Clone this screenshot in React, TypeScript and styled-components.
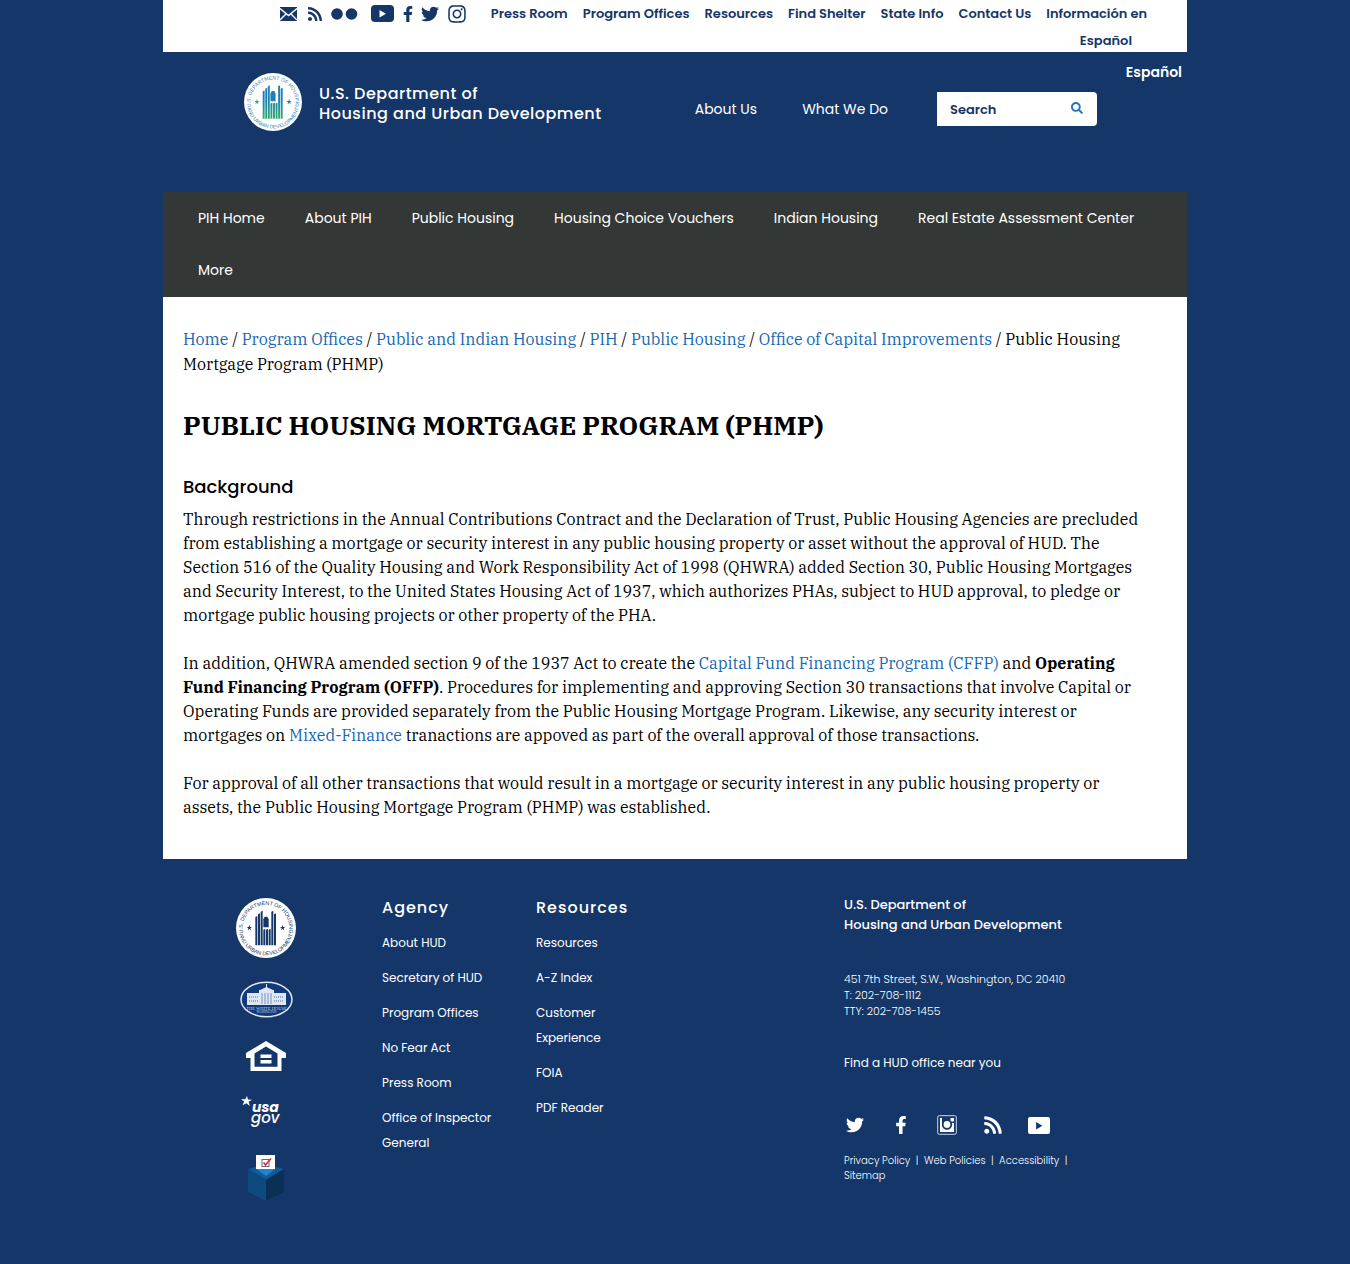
import React from "react";
import styled, { createGlobalStyle } from "styled-components";
import { FaFacebookF, FaInstagram, FaRss, FaSearch, FaTwitter } from "react-icons/fa";

const sans = 'Poppins, Inter, "Open Sans", sans-serif';
const serif = '"IBM Plex Serif", "Noto Serif", "DejaVu Serif", serif';
const navy = "#153669";

const GlobalStyle = createGlobalStyle`
  * { box-sizing: border-box; }
  html, body { margin: 0; background: ${navy}; }
  body { font-family: ${sans}; font-size: 14px; color: #000; }
  a { color: inherit; text-decoration: none; }
  ul { list-style: none; margin: 0; padding: 0; }
  svg { display: block; flex: none; }
`;

const Page = styled.div`
  max-width: 1024px;
  margin: 0 auto;
`;

/* ---------- utility bar ---------- */

const TopBar = styled.div`
  display: flex;
  justify-content: flex-end;
  align-items: flex-start;
  height: 52px;
  padding-right: 40px;
  background: #fff;
  color: ${navy};
`;

const TopSocial = styled.ul`
  display: flex;
  align-items: center;
  height: 27px;
`;

const TopSocialItem = styled.li<{ $gap: number }>`
  margin-right: ${(p) => p.$gap}px;
`;

const TopLinks = styled.nav`
  width: 680px;
  text-align: right;
  font-size: 13px;
  font-weight: 600;
  line-height: 27px;
`;

const TopLink = styled.a`
  margin-right: 15px;
`;

/* ---------- site header ---------- */

const Header = styled.header`
  height: 140px;
  color: #fff;
`;

const Language = styled.div`
  display: flex;
  justify-content: flex-end;
  height: 21px;
  padding: 10px 5px 0 0;
  font-size: 14px;
  font-weight: 600;
  line-height: 20px;
`;

const Masthead = styled.div`
  display: flex;
  align-items: center;
  padding: 0 90px 0 81px;
`;

const Brand = styled.a`
  display: flex;
  align-items: center;
  gap: 17px;
`;

const BrandName = styled.span`
  padding-top: 4px;
  font-size: 16px;
  font-weight: 500;
  line-height: 20px;
  letter-spacing: 0.5px;
`;

const Tools = styled.div`
  display: flex;
  align-items: center;
  margin-left: auto;
  padding-top: 14px;
`;

const MainLinks = styled.nav`
  display: flex;
  gap: 45px;
  line-height: 20px;
`;

const SearchForm = styled.form`
  display: flex;
  width: 160px;
  height: 34px;
  margin-left: 49px;
`;

const SearchInput = styled.input`
  width: 119px;
  padding: 2px 12px 0;
  border: 1px solid #fff;
  background: #fff;
  font: 600 13px ${sans};
  &::placeholder { color: ${navy}; opacity: 1; }
`;

const SearchButton = styled.button`
  flex: 1;
  display: flex;
  align-items: center;
  justify-content: center;
  padding: 0 0 2px;
  border: 0;
  border-radius: 0 4px 4px 0;
  background: #fff;
  color: #2e74b5;
`;

/* ---------- section navigation ---------- */

const SectionNav = styled.nav`
  display: flex;
  flex-wrap: wrap;
  padding: 0 15px 1px;
  background: #333837;
  color: #fff;
`;

const SectionLink = styled.a`
  padding: 0 20px;
  line-height: 52px;
`;

/* ---------- article ---------- */

const Article = styled.main`
  padding: 30px 20px 40px;
  background: #fff;
  font-family: ${serif};
  font-size: 16px;
  line-height: 24px;
`;

const Breadcrumb = styled.nav`
  line-height: 25px;
`;

const BodyLink = styled.a`
  color: #1567b3;
`;

const Title = styled.h1`
  margin: 31px 0 0;
  font-size: 26px;
  line-height: 34px;
`;

const SectionTitle = styled.h2`
  margin: 33px 0 8px;
  font-family: ${sans};
  font-size: 18px;
  font-weight: 500;
  line-height: 24px;
`;

const Paragraph = styled.p`
  margin: 0 0 24px;
  padding-right: 20px;
  &:last-child { margin-bottom: 0; }
`;

/* ---------- footer ---------- */

const Footer = styled.footer`
  display: flex;
  padding: 36px 90px 60px 73px;
  color: #fff;
`;

const LogoColumn = styled.div`
  display: flex;
  flex-direction: column;
  align-items: center;
  width: 60px;
  padding-top: 3px;
  margin-right: 86px;
`;

const LogoLink = styled.a<{ $gap: number }>`
  margin-bottom: ${(p) => p.$gap}px;
`;

const LinkColumn = styled.section`
  width: 114px;
  margin-right: 40px;
`;

const ColumnTitle = styled.h3`
  margin: 0 0 10px;
  font-size: 16px;
  font-weight: 500;
  line-height: 25px;
  letter-spacing: 1px;
`;

const ColumnItem = styled.li`
  margin-bottom: 10px;
  font-size: 12px;
  line-height: 25px;
`;

const Contact = styled.section`
  width: 253px;
  margin-left: auto;
`;

const ContactTitle = styled.h3`
  margin: 0 0 36px;
  font-size: 13px;
  font-weight: 500;
  line-height: 20px;
`;

const Address = styled.address`
  margin-bottom: 34px;
  font-size: 11px;
  font-style: normal;
  font-weight: 300;
  line-height: 16px;
`;

const Office = styled.a`
  display: block;
  margin-bottom: 42px;
  font-size: 12px;
  line-height: 20px;
`;

const FooterSocial = styled.ul`
  display: flex;
  align-items: center;
  height: 20px;
  gap: 24px;
  margin-bottom: 18px;
`;

const FooterSocialItem = styled.li`
  display: flex;
  justify-content: center;
  width: 22px;
`;

const Policies = styled.nav`
  font-size: 10px;
  font-weight: 300;
  line-height: 15px;
`;

/* ---------- drawings ---------- */

const bars = [
  [58, 54], [66, 46], [74, 38], [82, 92], [90, 92], [98, 92], [106, 38], [114, 46],
];

function Seal({ size, id, ink, top, bottom }: { size: number; id: string; ink: string; top: string; bottom: string }) {
  return (
    <svg width={size} height={size} viewBox="0 0 180 180" aria-hidden="true">
      <defs>
        <linearGradient id={`${id}-fill`} gradientUnits="userSpaceOnUse" x1="0" y1="38" x2="0" y2="142">
          <stop offset="0.4" stopColor={top} />
          <stop offset="1" stopColor={bottom} />
        </linearGradient>
        <path id={`${id}-arc`} d="M24 114 A70 70 0 1 1 156 114" />
        <path id={`${id}-lower`} d="M8 90 A82 82 0 0 0 172 90" />
      </defs>
      <circle cx="90" cy="90" r="90" fill="#fff" />
      <g fill={`url(#${id}-fill)`}>
        {bars.map(([x, y]) => (
          <path key={x} d={`M${x} ${y + 3}L${x + 6} ${y}V142H${x}Z`} />
        ))}
        <path d="M82 64L86 56H94L98 64V88H82Z" />
      </g>
      <path d="M40 81l2 6h6l-5 4 2 6-5-4-5 4 2-6-5-4h6z" fill={bottom} />
      <path d="M140 81l2 6h6l-5 4 2 6-5-4-5 4 2-6-5-4h6z" fill={top} />
      <g fill={ink} fontFamily="Liberation Sans, sans-serif" fontSize="16">
        <text><textPath href={`#${id}-arc`} startOffset="50%" textAnchor="middle">U.S. DEPARTMENT OF HOUSING</textPath></text>
        <text><textPath href={`#${id}-lower`} startOffset="50%" textAnchor="middle">AND URBAN DEVELOPMENT</textPath></text>
      </g>
    </svg>
  );
}

const MailIcon = () => (
  <svg width="17" height="14" viewBox="0 0 17 14">
    <path d="M0 0H17V14H0Z" fill="currentColor" />
    <path d="M0 1.500L8.500 8.500L17 1.500M0 13L6 7M17 13L11 7" fill="none" stroke="#fff" strokeWidth="1.400" />
  </svg>
);

const FlickrIcon = () => (
  <svg width="27" height="12" viewBox="0 0 27 12" fill="currentColor">
    <circle cx="6" cy="6" r="5.800" />
    <circle cx="20.500" cy="6" r="5.800" />
  </svg>
);

const YoutubeIcon = ({ width, height, radius, play }: { width: number; height: number; radius: number; play: string }) => (
  <svg width={width} height={height} viewBox="0 0 23 17" preserveAspectRatio="none">
    <rect width="23" height="17" rx={radius} fill="currentColor" />
    <path d="M8.500 5V12.500L15 8.700Z" fill={play} />
  </svg>
);

const CameraIcon = () => (
  <svg width="20" height="20" viewBox="0 0 20 20" fill="none" stroke="#fff">
    <rect x="0.700" y="0.700" width="18.600" height="18.600" rx="1.500" strokeWidth="1" stroke="#c9d5ea" />
    <path d="M3 8H17V17H3Z" fill="#fff" stroke="none" />
    <path d="M3 3H5V8H3ZM13.500 3H17V6.500H13.500Z" fill="#fff" stroke="none" />
    <circle cx="10" cy="9.500" r="4.300" fill="#fff" stroke={navy} strokeWidth="1.800" />
  </svg>
);

const WhiteHouse = () => (
  <svg width="53" height="37" viewBox="0 0 53 37" aria-hidden="true">
    <ellipse cx="26.500" cy="18.500" rx="25.500" ry="17.300" fill="#123a78" stroke="#dfe8f6" strokeWidth="1.500" />
    <g fill="#dfe6f4">
      <path d="M7 12H19V9H20L26.500 6L33 9H34V12H46V24H7Z" />
      <path d="M26 3H27V8H26Z" />
    </g>
    <path d="M9 16H19M34 16H44M9 20H19M34 20H44" stroke="#7b93c0" strokeWidth="1.600" strokeDasharray="1 1" />
    <path d="M22 12V23M25 12V23M28 12V23M31 12V23" stroke="#7b93c0" strokeWidth="1" />
    <g fill="#c3d0e8" fontFamily="Liberation Serif, serif" textAnchor="middle">
      <text x="26.500" y="28.500" fontSize="4.500">THE WHITE HOUSE</text>
      <text x="26.500" y="32" fontSize="3">WASHINGTON</text>
    </g>
  </svg>
);

const EqualHousing = () => (
  <svg width="40" height="30" viewBox="0 0 40 30" fill="#fff" aria-hidden="true">
    <path fillRule="evenodd" d="M20 0L40 12V17H35.500V30H4.500V17H0V12ZM20 5.500L8.500 12.500V25.800H31.500V12.500Z" />
    <path d="M14.500 13.500H25.500V17H14.500ZM14.500 19H25.500V22.500H14.500Z" />
  </svg>
);

const UsaGov = () => (
  <svg width="50" height="32" viewBox="0 0 50 32" fill="#fff" aria-hidden="true">
    <path d="M6 0L7 3.500L11 3.700L7.600 5.800L8.800 10L5.400 7.200L1.500 9.200L3.200 5.500L0 3.200L4.200 3.300Z" />
    <g fontFamily="Poppins, Inter, sans-serif" fontStyle="italic">
      <text x="11" y="16" fontSize="14" fontWeight="700">usa</text>
      <text x="10" y="27" fontSize="15" fontWeight="500">gov</text>
    </g>
  </svg>
);

const VoteBox = () => (
  <svg width="36" height="46" viewBox="0 0 36 46" aria-hidden="true">
    <path d="M0 14L18 9L36 14L18 25Z" fill="#0f5a97" />
    <path d="M0 14L18 25V46L0 37Z" fill="#0d4a80" />
    <path d="M36 14L18 25V46L36 37Z" fill="#0a3055" />
    <path d="M8 0H27V14H8Z" fill="#fff" />
    <path d="M8 14H27L18 21Z" fill="#1c86cf" />
    <rect x="14" y="4.500" width="7" height="7" fill="none" stroke="#667" />
    <path d="M15.500 7.500L17.500 10L23 3.500" fill="none" stroke="#d3293f" strokeWidth="1.500" />
  </svg>
);

/* ---------- content ---------- */

const topLinks = ["Press Room", "Program Offices", "Resources", "Find Shelter", "State Info", "Contact Us", "Información en Español"];
const sections = ["PIH Home", "About PIH", "Public Housing", "Housing Choice Vouchers", "Indian Housing", "Real Estate Assessment Center", "More"];
const trail = ["Home", "Program Offices", "Public and Indian Housing", "PIH", "Public Housing", "Office of Capital Improvements"];
const agency = ["About HUD", "Secretary of HUD", "Program Offices", "No Fear Act", "Press Room", "Office of Inspector General"];
const resources = ["Resources", "A-Z Index", "Customer Experience", "FOIA", "PDF Reader"];

const topSocial = [
  { label: "Email", gap: 10, icon: <MailIcon /> },
  { label: "RSS", gap: 8, icon: <FaRss size={16} /> },
  { label: "Flickr", gap: 13, icon: <FlickrIcon /> },
  { label: "YouTube", gap: 6, icon: <YoutubeIcon width={23} height={17} radius={4} play="#fff" /> },
  { label: "Facebook", gap: 5, icon: <FaFacebookF size={16} /> },
  { label: "Twitter", gap: 8, icon: <FaTwitter size={18} /> },
  { label: "Instagram", gap: 0, icon: <FaInstagram size={20} /> },
];

const footerSocial = [
  { label: "Twitter", icon: <FaTwitter size={18} /> },
  { label: "Facebook", icon: <FaFacebookF size={18} /> },
  { label: "Instagram", icon: <CameraIcon /> },
  { label: "RSS", icon: <FaRss size={20} /> },
  { label: "YouTube", icon: <YoutubeIcon width={22} height={17} radius={2} play={navy} /> },
];

function FooterLinks({ title, items }: { title: string; items: string[] }) {
  return (
    <LinkColumn>
      <ColumnTitle>{title}</ColumnTitle>
      <ul>
        {items.map((item) => (
          <ColumnItem key={item}><a href="#">{item}</a></ColumnItem>
        ))}
      </ul>
    </LinkColumn>
  );
}

export default function App() {
  return (
    <>
      <GlobalStyle />
      <Page>
        <TopBar>
          <TopSocial>
            {topSocial.map(({ label, gap, icon }) => (
              <TopSocialItem key={label} $gap={gap}><a href="#" aria-label={label}>{icon}</a></TopSocialItem>
            ))}
          </TopSocial>
          <TopLinks>
            {topLinks.map((label) => (
              <React.Fragment key={label}><TopLink href="#">{label}</TopLink><wbr /></React.Fragment>
            ))}
          </TopLinks>
        </TopBar>

        <Header>
          <Language><a href="#">Español</a></Language>
          <Masthead>
            <Brand href="#">
              <Seal size={58} id="head-seal" ink="#3a86b5" top="#1c7fb8" bottom="#35ab6c" />
              <BrandName>U.S. Department of<br />Housing and Urban Development</BrandName>
            </Brand>
            <Tools>
              <MainLinks>
                <a href="#">About Us</a>
                <a href="#">What We Do</a>
              </MainLinks>
              <SearchForm>
                <SearchInput type="text" placeholder="Search" aria-label="Search" />
                <SearchButton type="button" aria-label="Submit search"><FaSearch size={12} /></SearchButton>
              </SearchForm>
            </Tools>
          </Masthead>
        </Header>

        <SectionNav>
          {sections.map((label) => <SectionLink key={label} href="#">{label}</SectionLink>)}
        </SectionNav>

        <Article>
          <Breadcrumb aria-label="Breadcrumb">
            {trail.map((label) => (
              <React.Fragment key={label}><BodyLink href="#">{label}</BodyLink> / </React.Fragment>
            ))}
            Public Housing Mortgage Program (PHMP)
          </Breadcrumb>
          <Title>PUBLIC HOUSING MORTGAGE PROGRAM (PHMP)</Title>
          <SectionTitle>Background</SectionTitle>
          <Paragraph>
            Through restrictions in the Annual Contributions Contract and the Declaration of Trust, Public Housing Agencies are precluded from establishing a mortgage or security interest in any public housing property or asset without the approval of HUD. The Section 516 of the Quality Housing and Work Responsibility Act of 1998 (QHWRA) added Section 30, Public Housing Mortgages and Security Interest, to the United States Housing Act of 1937, which authorizes PHAs, subject to HUD approval, to pledge or mortgage public housing projects or other property of the PHA.
          </Paragraph>
          <Paragraph>
            In addition, QHWRA amended section 9 of the 1937 Act to create the <BodyLink href="#">Capital Fund Financing Program (CFFP)</BodyLink> and <b>Operating Fund Financing Program (OFFP)</b>. Procedures for implementing and approving Section 30 transactions that involve Capital or Operating Funds are provided separately from the Public Housing Mortgage Program. Likewise, any security interest or mortgages on <BodyLink href="#">Mixed-Finance</BodyLink> tranactions are appoved as part of the overall approval of those transactions.
          </Paragraph>
          <Paragraph>
            For approval of all other transactions that would result in a mortgage or security interest in any public housing property or assets, the Public Housing Mortgage Program (PHMP) was established.
          </Paragraph>
        </Article>

        <Footer>
          <LogoColumn>
            <LogoLink $gap={23} href="#" aria-label="HUD seal"><Seal size={60} id="foot-seal" ink="#153669" top="#153669" bottom="#153669" /></LogoLink>
            <LogoLink $gap={23} href="#" aria-label="The White House"><WhiteHouse /></LogoLink>
            <LogoLink $gap={25} href="#" aria-label="Equal Housing Opportunity"><EqualHousing /></LogoLink>
            <LogoLink $gap={27} href="#" aria-label="USA.gov"><UsaGov /></LogoLink>
            <LogoLink $gap={0} href="#" aria-label="Vote"><VoteBox /></LogoLink>
          </LogoColumn>
          <FooterLinks title="Agency" items={agency} />
          <FooterLinks title="Resources" items={resources} />
          <Contact>
            <ContactTitle>U.S. Department of<br />Housing and Urban Development</ContactTitle>
            <Address>451 7th Street, S.W., Washington, DC 20410<br />T: 202-708-1112<br />TTY: 202-708-1455</Address>
            <Office href="#">Find a HUD office near you</Office>
            <FooterSocial>
              {footerSocial.map(({ label, icon }) => (
                <FooterSocialItem key={label}><a href="#" aria-label={label}>{icon}</a></FooterSocialItem>
              ))}
            </FooterSocial>
            <Policies>
              <a href="#">Privacy Policy</a>&nbsp; |&nbsp; <a href="#">Web Policies</a>&nbsp; |&nbsp; <a href="#">Accessibility</a>&nbsp; |&nbsp; <a href="#">Sitemap</a>
            </Policies>
          </Contact>
        </Footer>
      </Page>
    </>
  );
}
